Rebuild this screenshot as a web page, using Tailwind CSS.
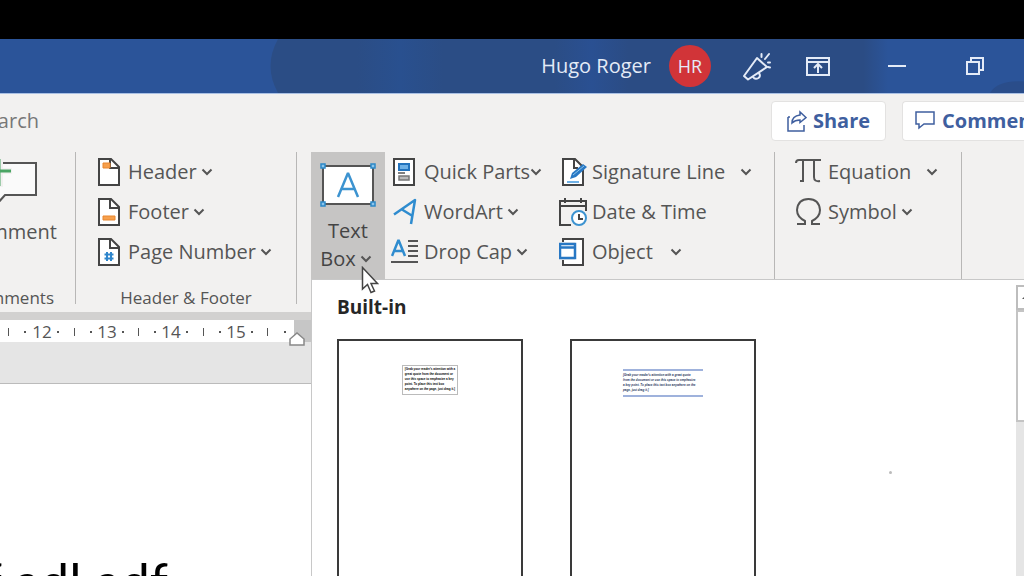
<!DOCTYPE html>
<html lang="en">
<head>
    <meta charset="UTF-8">
    <meta name="viewport" content="width=device-width, initial-scale=1.0">
    <title>Document - Word</title>
    <script src="https://cdn.jsdelivr.net/npm/@tailwindcss/browser@4"></script>
</head>
<body class="h-screen overflow-hidden flex flex-col bg-[#e5e5e5] font-['Open_Sans',sans-serif] text-xl leading-7 text-[#555]">
    <svg class="hidden">
        <symbol id="chevron" viewBox="0 0 12 8"><path d="M1.5 1.5 6 6l4.500-4.500" fill="none" stroke="#555" stroke-width="2" /></symbol>
        <symbol id="page" viewBox="0 0 24 28"><path d="M2 1h12l8 8v18H2z" fill="#fff" stroke="#444" stroke-width="2" /><path d="M13 1v9h9" fill="none" stroke="#444" stroke-width="2" /></symbol>
    </svg>

    <div class="h-[39px] shrink-0 bg-black"></div>

    <!-- Title bar -->
    <header class="relative h-[55px] shrink-0 flex items-center justify-end bg-[#2b5499] text-[#e4ebf7] border-b border-[#a9c0e4]">
        <svg class="absolute inset-0 w-full h-full" viewBox="0 0 1024 56" preserveAspectRatio="none">
            <defs>
                <linearGradient id="sky">
                    <stop offset="0" stop-color="#2b4d85" /><stop offset=".14" stop-color="#2b4d85" /><stop offset=".21" stop-color="#29508f" /><stop offset=".28" stop-color="#2b4d85" />
                    <stop offset=".46" stop-color="#2b4d85" /><stop offset=".52" stop-color="#2a5092" /><stop offset=".58" stop-color="#2b4c84" /><stop offset=".96" stop-color="#2b4c84" /><stop offset="1" stop-color="#2b5499" />
                </linearGradient>
            </defs>
            <path d="M278 0h610v56H278q-15-28 0-56z" fill="url(#sky)" />
            <path d="M990 56q8-14 34-12v12z" fill="#2a4d8a" />
        </svg>
        <span class="relative mr-[18px]">Hugo Roger</span>
        <button class="relative mr-8 size-[42px] rounded-full bg-[#d13438] text-lg" aria-label="Account">HR</button>
        <button class="relative mr-[35px] w-7" aria-label="What's new">
            <svg class="w-7 h-8" viewBox="0 0 28 32" fill="none" stroke="#e4ebf7" stroke-width="2" stroke-linejoin="round" stroke-linecap="round">
                <path d="M14 8 24 17 5 29.500 1 26z" /><path d="M10 27q2 3 5.500 1 2.500-2 .5-5" /><path d="M18.500 7V4M22 9l4-5M25 12.500h2M25 17l2 .5" />
            </svg>
        </button>
        <button class="relative mr-[57px] w-6" aria-label="Ribbon display options">
            <svg class="w-6 h-5" viewBox="0 0 24 20" fill="none" stroke="#e4ebf7" stroke-width="2"><path d="M1 2h22v17H1zM1 6h22" /><path d="M12 17V8M8 12l4-4 4 4" /></svg>
        </button>
        <button class="relative mr-[58px] w-5" aria-label="Minimize">
            <svg class="w-5 h-5" viewBox="0 0 20 20" stroke="#e4ebf7" stroke-width="2"><path d="M1 10h18" /></svg>
        </button>
        <button class="relative mr-[39px] w-5" aria-label="Restore">
            <svg class="w-5 h-5" viewBox="0 0 20 20" fill="none" stroke="#e4ebf7" stroke-width="2"><path d="M2 6h12v12H2zM6 5V2h12v12h-3" /></svg>
        </button>
    </header>

    <!-- Search and sharing -->
    <div class="h-[54px] shrink-0 flex items-center bg-[#f2f1f0] text-[#777]">
        <div class="w-[39px] flex justify-end overflow-hidden whitespace-nowrap">Search</div>
        <div class="flex-1 flex justify-end gap-4 font-bold text-[#3f5f9f]">
            <button class="h-10 w-[115px] shrink-0 flex items-center justify-center gap-[6px] rounded bg-white border border-[#e3e2e1]">
                <svg class="w-5 h-6" viewBox="0 0 20 24" fill="none" stroke="#3f5f9f" stroke-width="1.500"><path d="M1 8v14h16v-6M1 8h2" /><path d="M5 14q0-7 8-8V3l6 5.500-6 5V11q-5 0-8 3z" /></svg>
                Share
            </button>
            <button class="h-10 w-[122px] shrink-0 flex items-center gap-[7px] pl-3 rounded-l bg-white border border-r-0 border-[#e3e2e1] overflow-hidden">
                <svg class="w-5 h-5 shrink-0" viewBox="0 0 20 20" fill="none" stroke="#3f5f9f" stroke-width="1.500"><path d="M1 1h18v12H9l-5 4v-4H1z" /></svg>
                Comments
            </button>
        </div>
    </div>

    <!-- Ribbon -->
    <div class="relative z-10 h-[164px] shrink-0 flex pt-1 bg-[#f2f1f0]">
        <section class="w-[76px] shrink-0 h-[152px] flex flex-col items-end border-r border-[#b8b7b6] overflow-x-clip">
            <button class="flex flex-col items-end pr-[18px] h-[136px] shrink-0">
                <svg class="w-[58px] h-[60px] mr-5" viewBox="0 0 58 60" fill="none"><path d="M0 11h57v32H26l-8 9V43H0z" fill="#fafafa" stroke="#555" stroke-width="2" /><path d="M21 5v30M9 19h24" stroke="#f2f1f0" stroke-width="6" /><path d="M20 7v27M8 19h24" stroke="#4aa564" stroke-width="3" /></svg>
                <span class="mt-[6px]">Comment</span>
            </button>
            <div class="pr-[21px] text-[17px] leading-5">Comments</div>
        </section>

        <section class="w-[221px] shrink-0 h-[152px] flex flex-col border-r border-[#b8b7b6]">
            <div class="flex flex-col items-start pl-[21px] h-[136px] shrink-0">
                <button class="h-10 flex items-center gap-[7px]">
                    <svg class="w-6 h-7" viewBox="0 0 24 28"><use href="#page" /><path d="M6 5h7v5H6z" fill="#f6a04d" stroke="#e8862e" /></svg>
                    <span class="flex items-center gap-1">Header <svg class="w-3 h-2"><use href="#chevron" /></svg></span>
                </button>
                <button class="h-10 flex items-center gap-[7px]">
                    <svg class="w-6 h-7" viewBox="0 0 24 28"><use href="#page" /><path d="M6 18h12v4H6z" fill="#f6a04d" stroke="#e8862e" /></svg>
                    <span class="flex items-center gap-1">Footer <svg class="w-3 h-2"><use href="#chevron" /></svg></span>
                </button>
                <button class="h-10 flex items-center gap-[7px]">
                    <svg class="w-6 h-7" viewBox="0 0 24 28"><use href="#page" /><path d="M10 14v9M14 14v9M7.500 16.500h9M7.500 20.500h9" stroke="#2f86cc" stroke-width="2" /></svg>
                    <span class="flex items-center gap-1">Page Number <svg class="w-3 h-2"><use href="#chevron" /></svg></span>
                </button>
            </div>
            <div class="text-center text-[17px] leading-5">Header &amp; Footer</div>
        </section>

        <section class="w-[478px] shrink-0 flex pl-[14px] border-r border-[#b8b7b6]">
            <div class="relative shrink-0">
                <button class="w-[74px] h-[128px] flex flex-col items-center bg-[#c6c5c4] text-[#444]">
                    <svg class="mt-[9px] w-14 h-[48px]" viewBox="0 0 56 48">
                        <path d="M3 5h50v38H3z" fill="#fff" stroke="#555" stroke-width="2" />
                        <path d="M18 36 28 12l10 24M21.500 28h13" fill="none" stroke="#3c93d0" stroke-width="2.500" stroke-linejoin="bevel" />
                        <path d="M1 3h4v4H1zM51 3h4v4h-4zM1 41h4v4H1zM51 41h4v4h-4z" fill="#8cc4ea" stroke="#2b88c8" stroke-width="1.500" />
                    </svg>
                    <span class="mt-2">Text</span>
                    <span class="flex items-center gap-1 pr-1">Box <svg class="w-3 h-2"><use href="#chevron" /></svg></span>
                </button>

                <!-- Text box gallery -->
                <div class="absolute left-0 top-[127px] w-[calc(100vw-311px)] h-[calc(100vh-279px)] flex bg-white border-l border-t border-[#c8c8c8]">
                    <div class="flex-1 flex flex-col pl-[25px] pt-[13px]">
                        <h2 class="text-[19px] leading-7 font-bold text-[#262626]">Built-in</h2>
                        <div class="mt-[18px] flex-1 flex gap-[47px]">
                            <button class="w-[186px] h-64 flex flex-col items-center border-2 border-[#3a3a3a] pt-6" aria-label="Simple Text Box">
                                <span class="h-[30px] border border-[#bbb] px-[2px] py-px text-left font-['Liberation_Sans',sans-serif] text-[3px] leading-[5px] font-bold text-black whitespace-nowrap">[Grab your reader's attention with a<br>great quote from the document or<br>use this space to emphasize a key<br>point. To place this text box<br>anywhere on the page, just drag it.]</span>
                            </button>
                            <button class="w-[186px] h-64 flex flex-col items-center border-2 border-[#3a3a3a] pt-7" aria-label="Austin Quote">
                                <span class="w-20 h-7 border-y-2 border-[#9fb2dc] py-[2px] text-left font-['Liberation_Sans',sans-serif] text-[3px] leading-[5px] font-bold italic text-[#26345c] whitespace-nowrap">[Grab your reader's attention with a great quote<br>from the document or use this space to emphasize<br>a key point. To place this text box anywhere on the<br>page, just drag it.]</span>
                            </button>
                        </div>
                    </div>
                    <div class="w-2 shrink-0 mt-[5px] flex flex-col bg-[#e5e5e5]">
                        <button class="h-[25px] shrink-0 flex items-center justify-end bg-white border-2 border-r-0 border-[#bdbdbd]" aria-label="Scroll up"><svg class="w-[2px] h-[2px]" viewBox="0 0 2 2"><path d="M2 0v2H0z" fill="#555" /></svg></button>
                        <div class="h-28 shrink-0 bg-white border-2 border-r-0 border-[#c4c4c4]"></div>
                    </div>
                    <span class="absolute left-[577px] top-[191px] size-[3px] rounded-full bg-[#bbb]"></span>
                </div>

                <svg class="absolute left-[50px] top-[114px] w-[18px] h-7" viewBox="0 0 18 28"><path d="M1.500 1.500v21.500l5-4.500 3.500 8 3.500-1.500-3.500-7.500h6.500z" fill="#fff" stroke="#444" stroke-width="1.500" /></svg>
            </div>

            <div class="ml-[6px] w-[168px] shrink-0 flex flex-col items-start">
                <button class="h-10 flex items-center gap-[5px]">
                    <svg class="w-7 h-7" viewBox="0 0 28 28"><path d="M3 1h20v26H3z" fill="#fff" stroke="#444" stroke-width="2" /><path d="M8 6h10v6H8z" fill="#6fb1e6" stroke="#2273bd" stroke-width="2" /><path d="M7 15h7" stroke="#555" stroke-width="1.500" /><path d="M8 18h10v4H8z" fill="#bbb" stroke="#777" stroke-width="1.500" /></svg>
                    <span class="flex items-center">Quick Parts <svg class="w-3 h-2"><use href="#chevron" /></svg></span>
                </button>
                <button class="h-10 flex items-center gap-[5px]">
                    <svg class="w-7 h-7" viewBox="0 0 28 28" fill="none" stroke="#2f8ccf" stroke-width="2.500" stroke-linejoin="round"><path d="M3 16.500 24 2 20 26M11 11.500l10.500 6.500" /></svg>
                    <span class="flex items-center gap-1">WordArt <svg class="w-3 h-2"><use href="#chevron" /></svg></span>
                </button>
                <button class="h-10 flex items-center gap-[5px]">
                    <svg class="w-7 h-7" viewBox="0 0 28 28" fill="none" stroke-width="2"><path d="M1 18 7.500 2 14 18M3.500 13h8" stroke="#2f8ccf" stroke-width="2.500" stroke-linejoin="bevel" /><path d="M17 3h10M17 8h10M17 13h10M17 18h10M0 24h27" stroke="#555" /></svg>
                    <span class="flex items-center gap-1">Drop Cap <svg class="w-3 h-2"><use href="#chevron" /></svg></span>
                </button>
            </div>

            <div class="flex flex-col items-start">
                <button class="h-10 flex items-center gap-[5px]">
                    <svg class="w-7 h-7" viewBox="0 0 28 28"><path d="M4 1h12l8 8v18H4z" fill="#fff" stroke="#444" stroke-width="2" /><path d="M15 1v9h4" fill="none" stroke="#444" stroke-width="2" /><path d="M8 24h12" stroke="#6fb1e6" stroke-width="2" /><path d="m11 21 2-6L24 6l4 3-11 10z" fill="#2878c4" /><path d="M14 17 25 8" stroke="#8cc4ea" /></svg>
                    <span>Signature Line</span><svg class="ml-[10px] w-3 h-2"><use href="#chevron" /></svg>
                </button>
                <button class="h-10 flex items-center gap-[5px]">
                    <svg class="w-7 h-7" viewBox="0 0 28 28" fill="none" stroke="#444" stroke-width="2"><path d="M12 27H1V3h26v10M1 8h26M6 0v5M22 0v5" /><circle cx="20" cy="20" r="7" fill="#fff" stroke="#3c93d0" /><path d="M20 16v5h4" /></svg>
                    <span>Date &amp; Time</span>
                </button>
                <button class="h-10 flex items-center gap-[5px]">
                    <svg class="w-7 h-7" viewBox="0 0 28 28"><path d="M4 1h20v26H4z" fill="#fff" stroke="#444" stroke-width="2" /><path d="M0 4h16v18H0z" fill="#f2f1f0" /><path d="M1 6h15v14H1zM1 9.500h15" fill="#fff" stroke="#2878c4" stroke-width="2.500" /></svg>
                    <span>Object</span><svg class="ml-3 w-3 h-2"><use href="#chevron" /></svg>
                </button>
            </div>
        </section>

        <section class="w-[187px] shrink-0 flex flex-col items-start pl-5 border-r border-[#b8b7b6]">
            <button class="h-10 flex items-center gap-[5px]">
                <svg class="w-7 h-7" viewBox="0 0 28 28" fill="none" stroke="#555" stroke-width="2"><path d="M1 5q0-3 3-3h22M8 2v21M5 23h4M19 2v17q0 5 6 4" /></svg>
                <span>Equation</span><svg class="ml-[10px] w-3 h-2"><use href="#chevron" /></svg>
            </button>
            <button class="h-10 flex items-center gap-[5px]">
                <svg class="w-7 h-7" viewBox="0 0 28 28" fill="none" stroke="#555" stroke-width="2"><path d="M2 26h8v-3Q2 19 2 12 3 1 13.500 1T25 12Q25 19 17 23v3h8" /></svg>
                <span class="flex items-center gap-1">Symbol <svg class="w-3 h-2"><use href="#chevron" /></svg></span>
            </button>
        </section>
    </div>

    <!-- Ruler -->
    <div class="h-2 shrink-0 bg-[#d2d1d0]"></div>
    <div class="relative h-[22px] shrink-0 flex bg-[#c6c6c6]">
        <div class="w-[294px] flex items-center bg-white">
            <svg class="w-full h-[22px]" viewBox="0 0 294 22" fill="#555" font-size="17" text-anchor="middle">
                <path d="M8 8h1v8H8zM74 8h1v8h-1zM138 8h1v8h-1zM203 8h1v8h-1zM267 8h1v8h-1z" />
                <path d="M24 11h2v2h-2zM57 11h2v2h-2zM90 11h2v2h-2zM122 11h2v2h-2zM154 11h2v2h-2zM186 11h2v2h-2zM219 11h2v2h-2zM251 11h2v2h-2zM284 11h2v2h-2z" />
                <text x="42" y="18">12</text><text x="107" y="18">13</text><text x="171" y="18">14</text><text x="236" y="18">15</text>
            </svg>
        </div>
        <svg class="absolute left-[289px] top-3 w-4 h-[14px]" viewBox="0 0 16 14"><path d="M1 13V7l7-6 7 6v6z" fill="#fff" stroke="#888" stroke-width="1.500" /></svg>
    </div>

    <!-- Page -->
    <main class="mt-[41px] flex-1 overflow-hidden bg-white border-t border-[#bbb]">
        <p class="mt-[167px] w-[168px] flex justify-end whitespace-nowrap font-['Lato',sans-serif] text-[52px] leading-[60px] text-black">f adl adf</p>
    </main>
</body>
</html>
